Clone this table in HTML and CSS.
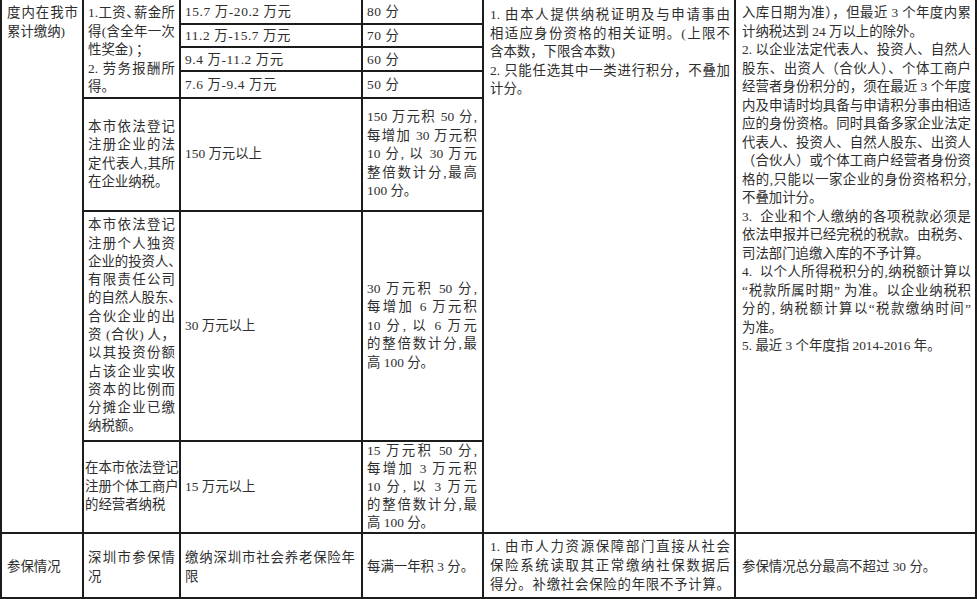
FILE: index.html
```html
<!DOCTYPE html>
<html lang="zh-CN">
<head>
<meta charset="utf-8">
<title>积分表</title>
<link rel="stylesheet" href="styles.css">
</head>
<body>
<div class="sheet">
  <div class="cell span7 top p-c1">
    <span class="l">度内在我市</span>
    <span class="l e">累计缴纳)</span>
  </div>
  <div class="cell span4 top p-c2">
    <span class="l">1.工资<span class="half">、</span>薪金所</span>
    <span class="l">得(含全年一次</span>
    <span class="l e">性奖金) ；</span>
    <span class="l">2. 劳务报酬所</span>
    <span class="l e">得。</span>
  </div>
  <div class="cell num p-c3">15.7 万-20.2 万元</div>
  <div class="cell num p-c4">80 分</div>
  <div class="cell span7 top p-c5 first5">
    <span class="l">1. 由本人提供纳税证明及与申请事由</span>
    <span class="l">相适应身份资格的相关证明。(上限不</span>
    <span class="l e">含本数，下限含本数)</span>
    <span class="l">2. 只能任选其中一类进行积分，不叠加</span>
    <span class="l e">计分。</span>
  </div>
  <div class="cell span7 top p-c6">
    <span class="l">入库日期为准），但最近 3 个年度内累</span>
    <span class="l e">计纳税达到 24 万以上的除外。</span>
    <span class="l">2. 以企业法定代表人、投资人、自然人</span>
    <span class="l">股东、出资人（合伙人）、个体工商户</span>
    <span class="l">经营者身份积分的，须在最近 3 个年度</span>
    <span class="l">内及申请时均具备与申请积分事由相适</span>
    <span class="l">应的身份资格。同时具备多家企业法定</span>
    <span class="l">代表人、投资人、自然人股东、出资人</span>
    <span class="l">（合伙人）或个体工商户经营者身份资</span>
    <span class="l">格的,只能以一家企业的身份资格积分,</span>
    <span class="l e">不叠加计分。</span>
    <span class="l">3.&nbsp; 企业和个人缴纳的各项税款必须是</span>
    <span class="l">依法申报并已经完税的税款。由税务、</span>
    <span class="l e">司法部门追缴入库的不予计算。</span>
    <span class="l">4.&nbsp; 以个人所得税积分的,纳税额计算以</span>
    <span class="l">“税款所属时期” 为准。以企业纳税积</span>
    <span class="l">分的, 纳税额计算以“税款缴纳时间”</span>
    <span class="l e">为准。</span>
    <span class="l e">5. 最近 3 个年度指 2014-2016 年。</span>
  </div>

  <div class="cell num p-c3">11.2 万-15.7 万元</div>
  <div class="cell num p-c4">70 分</div>

  <div class="cell num p-c3">9.4 万-11.2 万元</div>
  <div class="cell num p-c4">60 分</div>

  <div class="cell num p-c3">7.6 万-9.4 万元</div>
  <div class="cell num p-c4">50 分</div>

  <div class="cell p-c2">
    <span class="l">本市依法登记</span>
    <span class="l">注册企业的法</span>
    <span class="l">定代表人,其所</span>
    <span class="l e">在企业纳税。</span>
  </div>
  <div class="cell p-c3">150 万元以上</div>
  <div class="cell p-c4">
    <span class="l">150 万元积 50 分,</span>
    <span class="l">每增加 30 万元积</span>
    <span class="l">10 分, 以 30 万元</span>
    <span class="l">整倍数计分,最高</span>
    <span class="l e">100 分。</span>
  </div>

  <div class="cell p-c2 tight">
    <span class="l">本市依法登记</span>
    <span class="l">注册个人独资</span>
    <span class="l">企业的投资人、</span>
    <span class="l">有限责任公司</span>
    <span class="l">的自然人股东、</span>
    <span class="l">合伙企业的出</span>
    <span class="l">资 (合伙) 人，</span>
    <span class="l">以其投资份额</span>
    <span class="l">占该企业实收</span>
    <span class="l">资本的比例而</span>
    <span class="l">分摊企业已缴</span>
    <span class="l e">纳税额。</span>
  </div>
  <div class="cell p-c3">30 万元以上</div>
  <div class="cell p-c4">
    <span class="l">30 万元积 50 分,</span>
    <span class="l">每增加 6 万元积</span>
    <span class="l">10 分, 以 6 万元</span>
    <span class="l">的整倍数计分,最</span>
    <span class="l e">高 100 分。</span>
  </div>

  <div class="cell p-edge">
    <span class="l e">在本市依法登记</span>
    <span class="l e">注册个体工商户</span>
    <span class="l e">的经营者纳税</span>
  </div>
  <div class="cell p-c3">15 万元以上</div>
  <div class="cell p-c4 dense">
    <span class="l">15 万元积 50 分,</span>
    <span class="l">每增加 3 万元积</span>
    <span class="l">10 分, 以 3 万元</span>
    <span class="l">的整倍数计分,最</span>
    <span class="l e">高 100 分。</span>
  </div>

  <div class="cell p-c1 lower">参保情况</div>
  <div class="cell p-c2 lower">
    <span class="l">深圳市参保情</span>
    <span class="l e">况</span>
  </div>
  <div class="cell p-c3 lower">
    <span class="l">缴纳深圳市社会养老保险年</span>
    <span class="l e">限</span>
  </div>
  <div class="cell p-c4 lower">每满一年积 3 分。</div>
  <div class="cell p-c5 loose">
    <span class="l">1. 由市人力资源保障部门直接从社会</span>
    <span class="l">保险系统读取其正常缴纳社保数据后</span>
    <span class="l">得分。补缴社会保险的年限不予计算。</span>
  </div>
  <div class="cell p-c6 lower">参保情况总分最高不超过 30 分。</div>
</div>
</body>
</html>
```

FILE: styles.css
```css
* { box-sizing: border-box; }
html, body { margin: 0; background: #ffffff; }

.sheet {
  display: grid;
  grid-template-columns: 80px 95px 180px 119px 250px 239px;
  grid-template-rows: 23px 21px 22px 25px 111px 228px 90px 63px;
  gap: 2px;
  width: 977px;
  padding: 0 2px 2px 2px;
  background: #1c1c1c;
  font-family: "Liberation Serif", "Noto Sans CJK SC", serif;
  font-size: 13.4px;
  line-height: 18.5px;
  color: #2e2e2e;
}

.cell {
  background: #ffffff;
  display: flex;
  flex-direction: column;
  justify-content: center;
  min-width: 0;
  padding: 0 4px;
}
.span7 { grid-row: span 7; }
.span4 { grid-row: span 4; }
.top { justify-content: flex-start; padding-top: 4px; }
.first5 { padding-top: 6px; }

.p-c1 { padding-left: 5px; padding-right: 4px; }
.p-c2 { padding-left: 4px; padding-right: 4px; }
.p-c3 { padding-left: 4px; padding-right: 6px; }
.p-c4 { padding-left: 4px; padding-right: 5px; }
.p-c5 { padding-left: 6px; padding-right: 4px; }
.p-c6 { padding-left: 6px; padding-right: 4px; }
.p-edge { padding-left: 1px; padding-right: 0; }

.num { letter-spacing: 0.6px; padding-top: 2px; }
.tight { line-height: 18.3px; }
.dense { line-height: 18px; }
.loose { line-height: 19px; }
.lower { padding-top: 4px; }

.l {
  display: block;
  white-space: nowrap;
  text-align: justify;
  text-align-last: justify;
}
.l.e { text-align-last: left; }
.half { letter-spacing: -6px; }
```
